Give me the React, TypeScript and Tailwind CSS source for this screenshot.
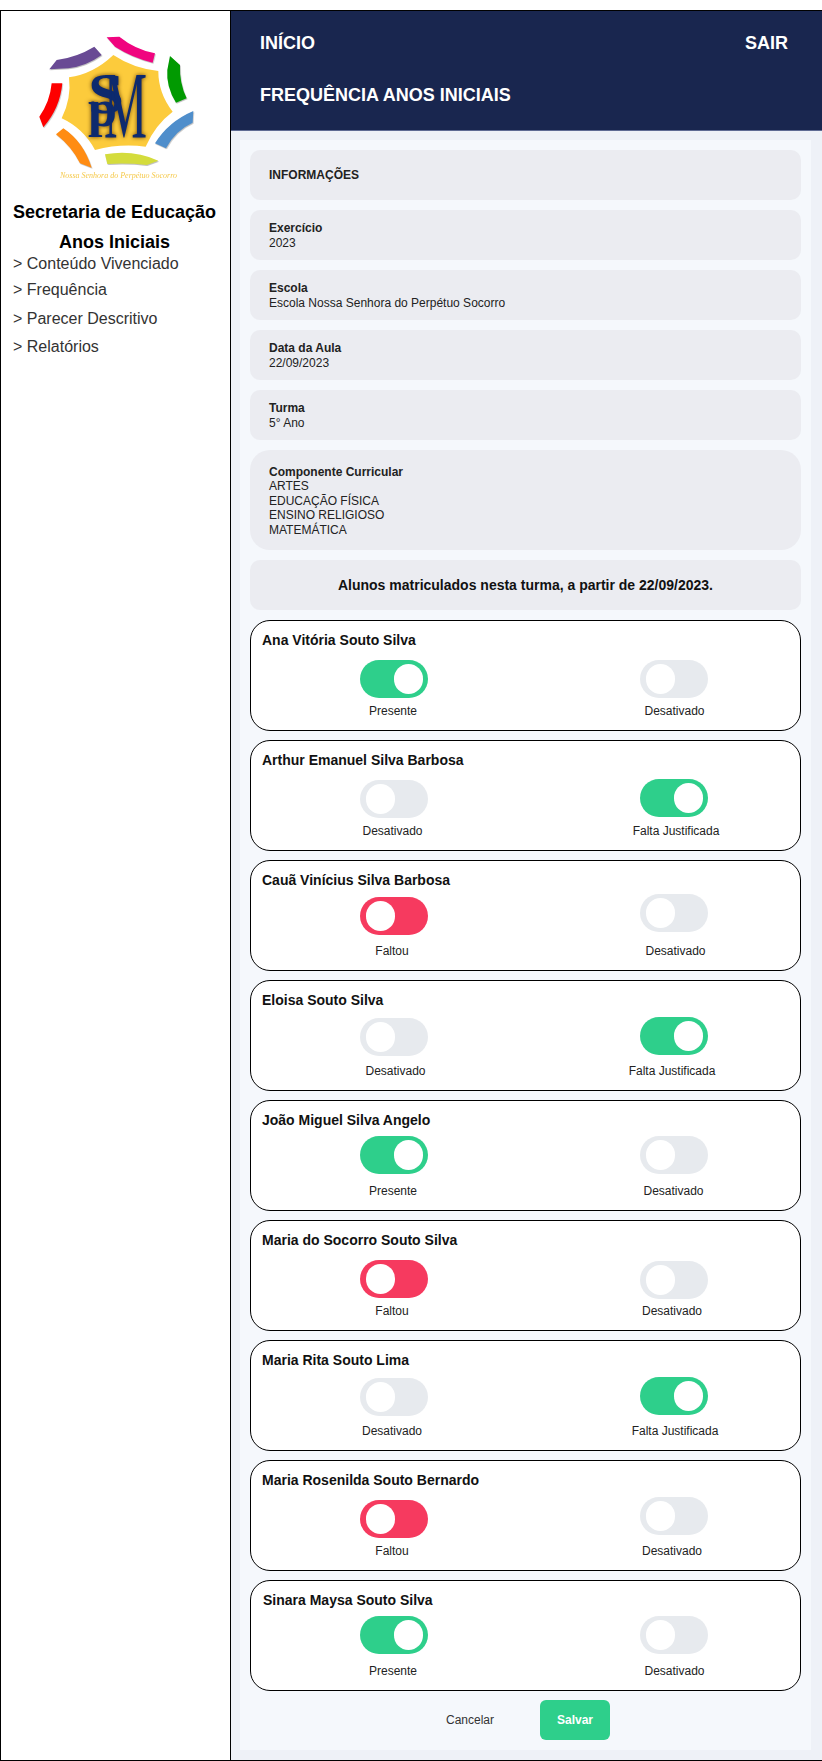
const links = [
  { label: "Conteúdo Vivenciado", gap: "mt-0" },
  { label: "Frequência", gap: "mt-[6px]" },
  { label: "Parecer Descritivo", gap: "mt-[9px]" },
  { label: "Relatórios", gap: "mt-[8px]" },
];

const info = [
  { label: "Exercício", value: "2023" },
  { label: "Escola", value: "Escola Nossa Senhora do Perpétuo Socorro" },
  { label: "Data da Aula", value: "22/09/2023" },
  { label: "Turma", value: "5° Ano" },
];

type ToggleState = "on" | "off" | "red";

type Student = {
  name: string;
  left: [ToggleState, string, number, number]; // state, label, toggle top, label offset
  right: [ToggleState, string, number, number];
  nameShift?: number;
};

const students: Student[] = [
  { name: "Ana Vitória Souto Silva", left: ["on", "Presente", 40, -1], right: ["off", "Desativado", 40, 0.5] },
  { name: "Arthur Emanuel Silva Barbosa", left: ["off", "Desativado", 40, -1.5], right: ["on", "Falta Justificada", 39, 2] },
  { name: "Cauã Vinícius Silva Barbosa", left: ["red", "Faltou", 37, -2], right: ["off", "Desativado", 34, 1.5] },
  { name: "Eloisa Souto Silva", left: ["off", "Desativado", 38, 1.5], right: ["on", "Falta Justificada", 37, -2] },
  { name: "João Miguel Silva Angelo", left: ["on", "Presente", 36, -1], right: ["off", "Desativado", 36, -0.5] },
  { name: "Maria do Socorro Souto Silva", left: ["red", "Faltou", 40, -2], right: ["off", "Desativado", 41, -2] },
  { name: "Maria Rita Souto Lima", left: ["off", "Desativado", 38, -2], right: ["on", "Falta Justificada", 37, 1] },
  { name: "Maria Rosenilda Souto Bernardo", left: ["red", "Faltou", 40, -2], right: ["off", "Desativado", 37, -2] },
  { name: "Sinara Maysa Souto Silva", left: ["on", "Presente", 36, -1], right: ["off", "Desativado", 36, 0.5], nameShift: 1 },
];

function Logo() {
  return (
    <svg viewBox="30 30 180 160" className="block w-[180px] h-[160px] ml-[29px] blur-[0.35px]">
      <g transform="scale(0.3333)">
        <g className="drop-shadow-[2px_3px_2px_rgba(0,0,0,0.25)]">
          <path d="M148 208 L170 180 Q230 172 283 140 L305 165 Q260 198 205 205 Z" fill="#694a94" />
          <path d="M320 112 L358 110 Q405 148 465 160 L458 188 Q395 172 345 140 Z" fill="#f0047f" />
          <path d="M510 168 L540 195 Q538 250 560 295 L528 308 Q498 260 502 210 Z" fill="#019a01" />
          <path d="M580 333 L578 368 Q525 392 498 445 L465 430 Q505 365 580 333 Z" fill="#4f8ecb" />
          <path d="M315 463 Q400 448 475 482 L440 495 Q380 488 322 492 Z" fill="#d4dc3c" />
          <path d="M190 385 Q250 425 275 503 L240 490 Q215 440 168 403 Z" fill="#ff8c13" />
          <path d="M155 250 L187 250 Q180 325 130 382 L118 350 Q150 305 155 250 Z" fill="#fe0000" />
        </g>
        <path
          d="M340 165 Q400 205 475 213 Q475 280 518 335 Q465 375 437 440 Q360 430 285 450 Q250 385 185 355 Q215 295 207 232 Q280 222 340 165 Z"
          fill="#fccb3c"
        />
      </g>
      <g fill="#0d2a6e" className="drop-shadow-[0_0_2px_rgba(90,50,0,0.9)]" fontFamily="'Liberation Serif', serif">
        <text x="88" y="113" fontSize="58" fontWeight="700" textLength="36" lengthAdjust="spacingAndGlyphs">S</text>
        <text x="88" y="126" fontSize="52" fontWeight="700">p</text>
        <text x="104" y="138" fontSize="95" textLength="43" lengthAdjust="spacingAndGlyphs">M</text>
      </g>
      <text
        x="118.5"
        y="178"
        fontSize="8"
        textAnchor="middle"
        fill="#f5c94a"
        fontStyle="italic"
        fontFamily="'Liberation Serif', serif"
      >
        Nossa Senhora do Perpétuo Socorro
      </text>
    </svg>
  );
}

function Toggle({ state, top }: { state: ToggleState; top: number }) {
  const track =
    state === "on" ? "bg-[#2ecf8b] justify-end pr-[5px]" : state === "red" ? "bg-[#f63a5f] pl-[6px]" : "bg-[#e7eaee] pl-[6px]";
  return (
    <div className={`flex items-center w-[68px] h-[38px] rounded-full ${track}`} style={{ marginTop: top - 40 }}>
      <div className="w-[29px] h-[30px] rounded-full bg-white" />
    </div>
  );
}

function Choice({ data }: { data: [ToggleState, string, number, number] }) {
  const [state, label, top, shift] = data;
  return (
    <div className="flex flex-col items-center w-[130px]">
      <div className="h-[42px] pt-[7px] mt-[-7px] flex justify-center">
        <Toggle state={state} top={top} />
      </div>
      <p className="mt-[8px] h-[16px] leading-[16px] text-[12px] text-[#222222] whitespace-nowrap" style={{ marginLeft: shift * 2 }}>
        {label}
      </p>
    </div>
  );
}

function StudentCard({ student }: { student: Student }) {
  return (
    <div className="h-[111px] bg-white border border-black rounded-[20px] px-[11px] pt-[9px]">
      <p className="h-[20px] leading-[20px] text-[14px] font-bold text-[#111111]" style={{ marginLeft: student.nameShift ?? 0 }}>
        {student.name}
      </p>
      <div className="flex gap-[150px] pl-[67px] pt-[10px]">
        <Choice data={student.left} />
        <Choice data={student.right} />
      </div>
    </div>
  );
}

export default function App() {
  return (
    <div className="bg-white pt-[10px] font-['Liberation_Sans',Arial,sans-serif]">
      <div className="flex h-[1751px] border-t border-b border-l border-black">
        <aside className="w-[229px] shrink-0 bg-white border-r border-black box-content">
          <div className="pt-[19px]">
            <Logo />
          </div>
          <div className="pt-[8px] pr-[2px] text-center font-bold text-[18px] text-black">
            <p className="leading-[28px]">Secretaria de Educação</p>
            <p className="mt-[4px] leading-[24px]">Anos Iniciais</p>
          </div>
          <nav className="pl-[12px] text-[16px] text-[#333333]">
            {links.map((link) => (
              <p key={link.label} className={`h-[20px] leading-[20px] ${link.gap}`}>
                &gt; {link.label}
              </p>
            ))}
          </nav>
        </aside>

        <main className="flex-1 min-w-0 bg-[#eef1f7]">
          <header className="h-[120px] bg-[#19264f] border-b border-[#5f6b93] px-[29px] text-white font-bold text-[18px]">
            <div className="flex justify-between pt-[20px] leading-[24px] pr-[5px]">
              <span>INÍCIO</span>
              <span>SAIR</span>
            </div>
            <h1 className="mt-[28px] leading-[24px]">FREQUÊNCIA ANOS INICIAIS</h1>
          </header>

          <div className="mt-[9px] ml-[9px] mr-[11px] h-[1610px] bg-[#f5f8fc] px-[10px] pt-[10px]">
            <div className="flex flex-col gap-[10px]">
              <div className="h-[50px] rounded-[10px] bg-[#ebecf1] px-[19px] flex items-center text-[12px] font-bold text-[#222222]">
                INFORMAÇÕES
              </div>
              {info.map((item) => (
                <div key={item.label} className="h-[50px] rounded-[10px] bg-[#ebecf1] px-[19px] pt-[11px] text-[12px] leading-[15px] text-[#222222]">
                  <p className="font-bold">{item.label}</p>
                  <p>{item.value}</p>
                </div>
              ))}
              <div className="h-[100px] rounded-[20px] bg-[#ebecf1] px-[19px] pt-[15px] text-[12px] leading-[14.4px] text-[#222222]">
                <p className="font-bold">Componente Curricular</p>
                <p>ARTES</p>
                <p>EDUCAÇÃO FÍSICA</p>
                <p>ENSINO RELIGIOSO</p>
                <p>MATEMÁTICA</p>
              </div>
              <div className="h-[50px] rounded-[10px] bg-[#ebecf1] flex items-center justify-center text-[14px] font-bold text-[#111111]">
                Alunos matriculados nesta turma, a partir de 22/09/2023.
              </div>
            </div>

            <div className="flex flex-col gap-[9px] mt-[10px]">
              {students.map((student) => (
                <StudentCard key={student.name} student={student} />
              ))}
            </div>

            <div className="flex justify-center items-center gap-[35px] pr-[6px] mt-[9px]">
              <button className="w-[70px] text-[12px] text-[#333333]">Cancelar</button>
              <button className="w-[70px] h-[40px] rounded-[6px] bg-[#2ecf8b] text-[12px] font-bold text-white">Salvar</button>
            </div>
          </div>
        </main>
      </div>
    </div>
  );
}
